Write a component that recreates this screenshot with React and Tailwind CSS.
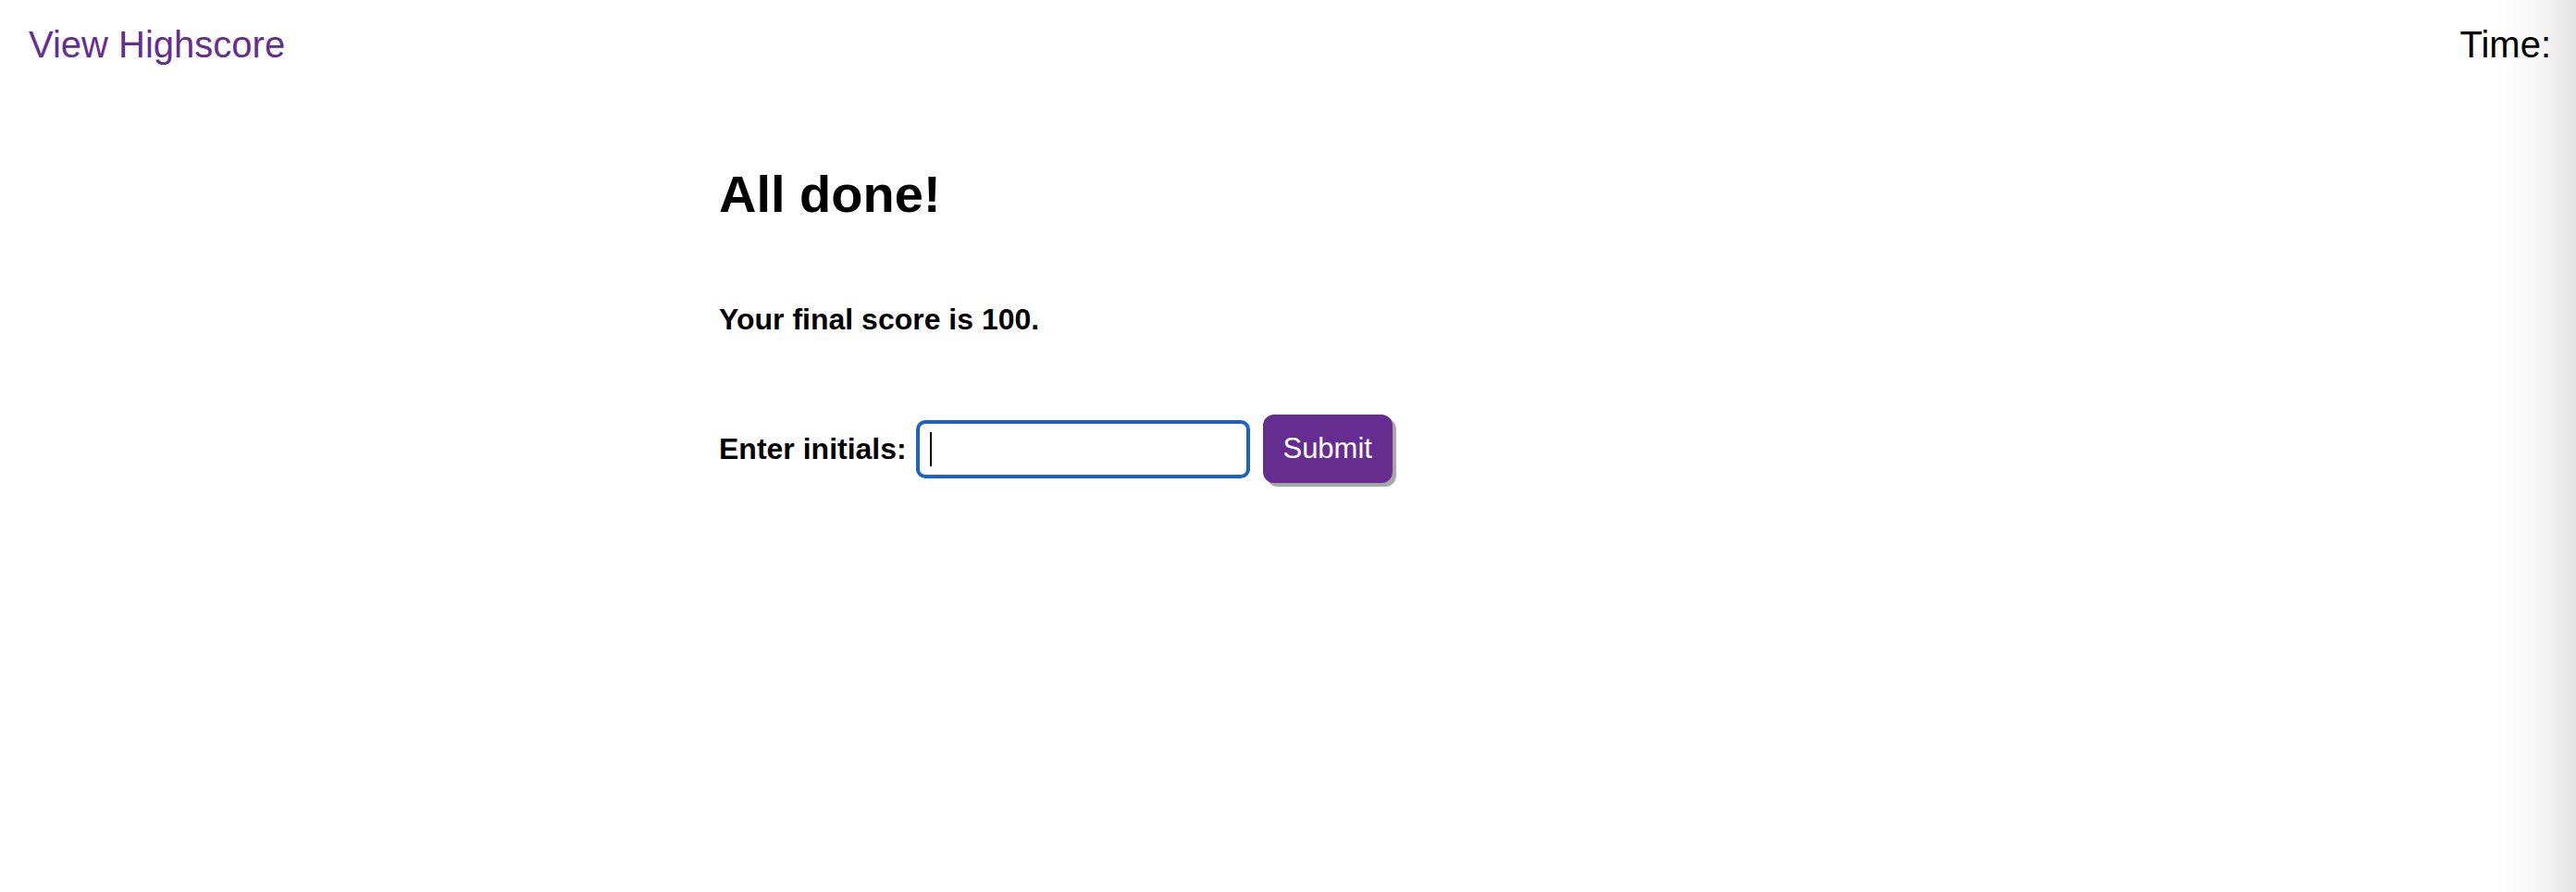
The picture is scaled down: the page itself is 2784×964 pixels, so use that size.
export default function App() {
  return (
    <div className="relative min-h-[964px] w-full overflow-hidden bg-white font-['Liberation_Sans',Arial,sans-serif] text-black">
      <div className="pointer-events-none absolute right-0 top-0 h-full w-[90px] bg-gradient-to-r from-white/0 via-[#f6f6f6]/80 to-[#e4e4e4]"></div>

      <header className="relative z-10 flex items-start justify-between pl-[31px] pr-[27px] pt-[25px]">
        <a href="#" className="text-[40px] leading-[46px] text-[#662d91] no-underline">
          View Highscore
        </a>
        <div className="text-[40px] leading-[46px] text-black">Time:</div>
      </header>

      <main className="relative z-10 mx-auto w-[1230px]">
        <h1 className="mt-[107px] text-[56px] font-bold leading-[64px]">All done!</h1>
        <p className="mt-[85px] text-[32px] font-bold leading-[37px]">Your final score is 100.</p>
        <div className="mt-[84px] flex items-center">
          <label className="text-[32px] font-bold leading-[37px]">Enter initials:</label>
          <div className="ml-[10px] flex h-[63px] w-[361px] items-center rounded-[10px] border-[4px] border-[#1f62c6] bg-white pl-[11px]">
            <span className="block h-[37px] w-[2px] bg-black"></span>
          </div>
          <button className="ml-[14px] h-[74px] w-[140px] rounded-[12px] bg-[#662d91] text-[31px] leading-[36px] text-white shadow-[4px_4px_1px_#a6a6a6]">
            Submit
          </button>
        </div>
      </main>
    </div>
  );
}
